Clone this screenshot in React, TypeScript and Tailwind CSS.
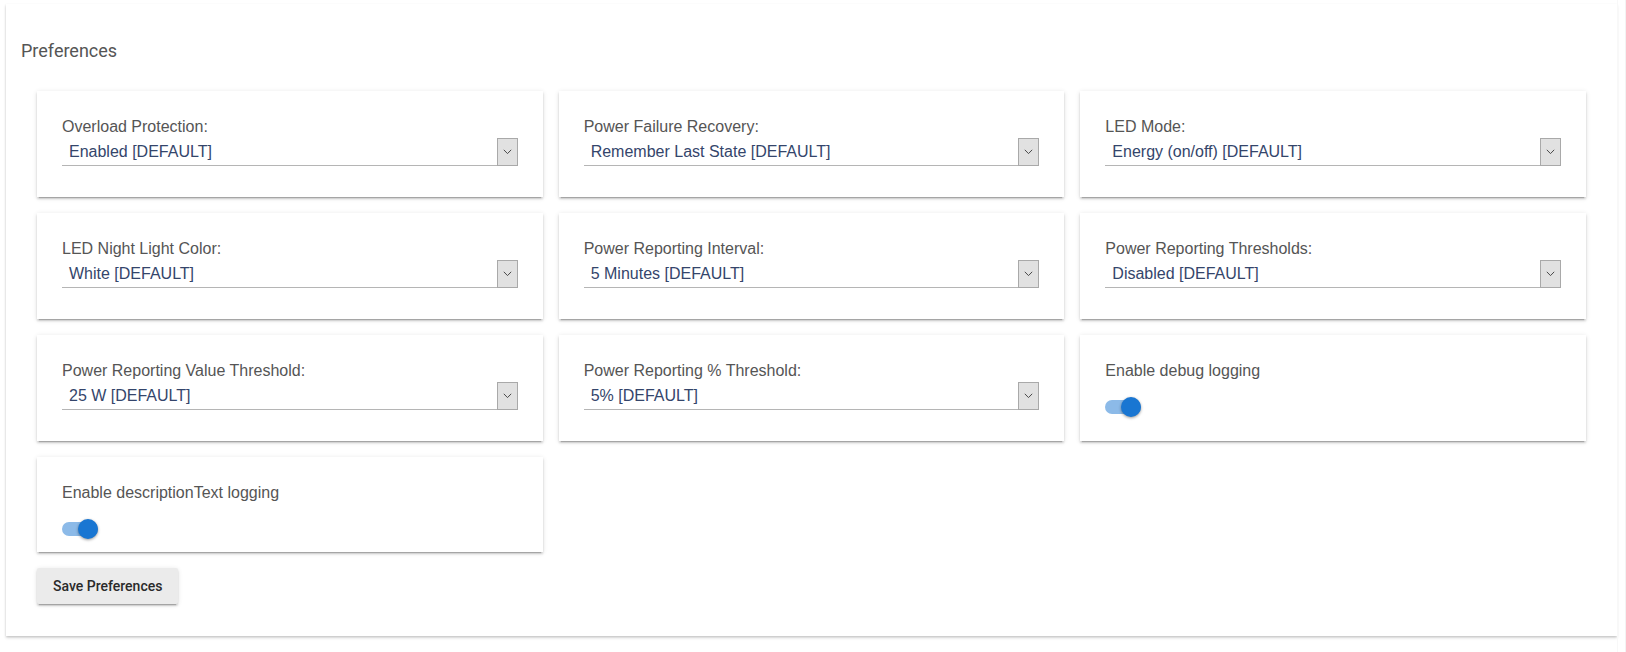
import React, { useState } from 'react';

type Pref =
  | { kind: 'enum'; label: string; value: string }
  | { kind: 'bool'; label: string; value: boolean };

const initialPrefs: Pref[] = [
  { kind: 'enum', label: 'Overload Protection:', value: 'Enabled [DEFAULT]' },
  { kind: 'enum', label: 'Power Failure Recovery:', value: 'Remember Last State [DEFAULT]' },
  { kind: 'enum', label: 'LED Mode:', value: 'Energy (on/off) [DEFAULT]' },
  { kind: 'enum', label: 'LED Night Light Color:', value: 'White [DEFAULT]' },
  { kind: 'enum', label: 'Power Reporting Interval:', value: '5 Minutes [DEFAULT]' },
  { kind: 'enum', label: 'Power Reporting Thresholds:', value: 'Disabled [DEFAULT]' },
  { kind: 'enum', label: 'Power Reporting Value Threshold:', value: '25 W [DEFAULT]' },
  { kind: 'enum', label: 'Power Reporting % Threshold:', value: '5% [DEFAULT]' },
  { kind: 'bool', label: 'Enable debug logging', value: true },
  { kind: 'bool', label: 'Enable descriptionText logging', value: true },
];

const cardShadow =
  'shadow-[0_2px_2px_0_rgba(0,0,0,0.14),0_3px_1px_-2px_rgba(0,0,0,0.2),0_1px_5px_0_rgba(0,0,0,0.12)]';

const SelectBox = ({ value }: { value: string }) => (
  <div className="mt-px flex h-7 items-stretch">
    <div className="flex flex-1 items-center border-b border-[#b5b5b5] pl-[7px] text-[16px] text-[#34456b]">
      {value}
    </div>
    <div className="flex w-[21px] items-center justify-center border border-[#a9a9a9] bg-[#e1e1e1]">
      <svg width="9" height="6" viewBox="0 0 9 6" fill="none">
        <path d="M0.8 0.8 L4.5 4.6 L8.2 0.8" stroke="#4a4a4a" strokeWidth="1" />
      </svg>
    </div>
  </div>
);

const Toggle = ({ on, onClick }: { on: boolean; onClick: () => void }) => (
  <button onClick={onClick} className="relative mt-4 block h-5 w-9">
    <span
      className={`absolute left-0 top-[3px] h-[14px] w-9 rounded-full ${
        on ? 'bg-[#8cbae8]' : 'bg-[#bdbdbd]'
      }`}
    />
    <span
      className={`absolute top-0 h-5 w-5 rounded-full shadow-[0_1px_3px_rgba(0,0,0,0.4)] ${
        on ? 'left-4 bg-[#1976d2]' : 'left-0 bg-[#fafafa]'
      }`}
    />
  </button>
);

export default function App() {
  const [prefs, setPrefs] = useState<Pref[]>(initialPrefs);

  const flip = (i: number) =>
    setPrefs((p) =>
      p.map((item, idx) =>
        idx === i && item.kind === 'bool' ? { ...item, value: !item.value } : item
      )
    );

  return (
    <div className="flex min-h-[652px] bg-white font-['Liberation_Sans',Arial,sans-serif]">
      <div className="flex-1 pl-[6px] pt-1">
        <div className="bg-white px-[31px] pb-8 pt-[35px] shadow-[0_1px_2px_rgba(0,0,0,0.15),0_2px_3px_rgba(0,0,0,0.12)]">
          <h2 className="-ml-4 h-6 font-['Roboto',sans-serif] text-[18px] leading-6 text-[#555]">
            Preferences
          </h2>

          <div className="mt-7 grid grid-cols-3 gap-4">
            {prefs.map((p, i) =>
              p.kind === 'enum' ? (
                <div key={p.label} className={`bg-white px-[25px] pb-[31px] pt-[26px] ${cardShadow}`}>
                  <div className="text-[16px] leading-5 text-[#555]">{p.label}</div>
                  <SelectBox value={p.value} />
                </div>
              ) : (
                <div key={p.label} className={`bg-white px-[25px] pb-[13px] pt-[26px] ${cardShadow}`}>
                  <div className="text-[16px] leading-5 text-[#555]">{p.label}</div>
                  <Toggle on={p.value} onClick={() => flip(i)} />
                </div>
              )
            )}
          </div>

          <button
            className={`mt-4 h-9 rounded-[2px] bg-[#ebebeb] px-4 font-['Roboto',sans-serif] text-[14px] font-medium text-[#2a2a2a] ${cardShadow}`}
          >
            Save Preferences
          </button>
        </div>
      </div>
      <div className="ml-2 w-px bg-[#f3f3f3] shadow-[-8px_0_0_#f8f8f8]" />
    </div>
  );
}
